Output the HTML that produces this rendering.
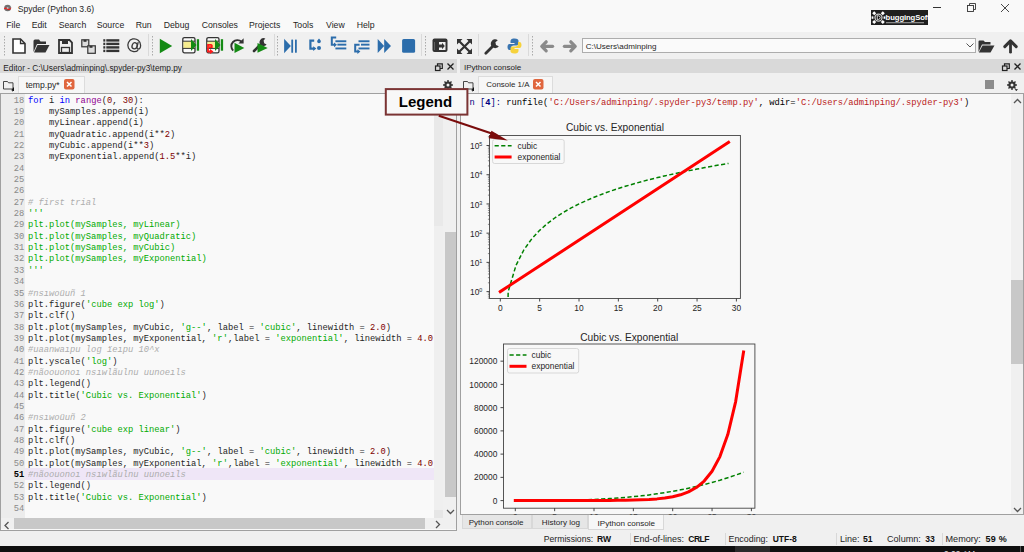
<!DOCTYPE html><html><head><meta charset="utf-8"><title>Spyder</title><style>html,body{margin:0;padding:0;}body{width:1024px;height:552px;overflow:hidden;position:relative;background:#f0f0f0;font-family:"Liberation Sans",sans-serif;}svg{display:block}</style></head><body>
<div style="position:absolute;left:0px;top:0px;width:1024px;height:32px;background:#f9f9f9;"></div>
<div style="position:absolute;left:0px;top:32px;width:1024px;height:26px;background:#f0f0f0;"></div>
<svg style="position:absolute;left:3px;top:4px;overflow:visible;" width="10" height="8" viewBox="0 0 10 8"><ellipse cx="4.6" cy="4" rx="3.4" ry="3.2" fill="#707070"/><path d="M1 4.6 Q2.5 2.6 4.5 4.2 Q6.5 5.6 8.4 3.2 L8 4.8 Q6.2 6.8 4.3 5.4 Q2.6 4.2 1.3 5.6 Z" fill="#ee1c1c"/><circle cx="4.6" cy="4" r="1" fill="#f4f4f4" opacity="0.6"/></svg>
<span style="position:absolute;left:17.75px;top:-0.93px;line-height:20px;font-size:8.6px;font-family:'Liberation Sans', sans-serif;color:#1f1f1f;font-weight:400;font-style:normal;white-space:pre;">Spyder (Python 3.6)</span>
<div style="position:absolute;left:933px;top:7px;width:8px;height:1px;background:#333;"></div>
<svg style="position:absolute;left:966px;top:2px;overflow:visible;" width="10" height="10" viewBox="0 0 10 10"><rect x="1.5" y="3.5" width="6" height="6" fill="none" stroke="#333" stroke-width="0.9"/><path d="M3.5 3.5 V1.5 H9.5 V7.5 H7.5" fill="none" stroke="#333" stroke-width="0.9"/></svg>
<svg style="position:absolute;left:1000px;top:3px;overflow:visible;" width="10" height="10" viewBox="0 0 10 10"><path d="M1 1 L9 9 M9 1 L1 9" stroke="#333" stroke-width="0.9"/></svg>
<div style="position:absolute;left:871px;top:9.7px;width:57px;height:15.2px;background:#1f1f1f;"></div>
<span style="position:absolute;left:885.60px;top:7.73px;line-height:20px;font-size:7.7px;font-family:'Liberation Sans', sans-serif;color:#fff;font-weight:700;font-style:normal;white-space:pre;letter-spacing:-0.1px">buggingSoft</span>
<svg style="position:absolute;left:871px;top:9.7px;overflow:visible;" width="15" height="15.2" viewBox="0 0 15 15.2"><path d="M3.2 1.2 L5.2 3.2 L3.2 5.2 L1.2 3.2 Z M11.8 1.2 L13.8 3.2 L11.8 5.2 L9.8 3.2 Z M3.2 10 L5.2 12 L3.2 14 L1.2 12 Z M11.8 10 L13.8 12 L11.8 14 L9.8 12 Z" fill="#fff"/><rect x="0.6" y="6.4" width="1.8" height="2.4" fill="#fff"/><rect x="12.6" y="6.4" width="1.8" height="2.4" fill="#fff"/><circle cx="7.5" cy="7.6" r="3.5" fill="#000" stroke="#cfcfcf" stroke-width="1.3"/><path d="M6.2 5.8 H7.4 A1.8 1.8 0 0 1 7.4 9.4 H6.2 Z" fill="none" stroke="#fff" stroke-width="0.9"/></svg>
<svg style="position:absolute;left:886px;top:21.6px;overflow:visible;" width="40" height="2" viewBox="0 0 40 2"><rect x="0" y="0" width="38" height="1.3" fill="#8a8a8a"/></svg>
<span style="position:absolute;left:6.30px;top:15.49px;line-height:20px;font-size:8.7px;font-family:'Liberation Sans', sans-serif;color:#1f1f1f;font-weight:400;font-style:normal;white-space:pre;">File</span>
<span style="position:absolute;left:31.70px;top:15.49px;line-height:20px;font-size:8.7px;font-family:'Liberation Sans', sans-serif;color:#1f1f1f;font-weight:400;font-style:normal;white-space:pre;">Edit</span>
<span style="position:absolute;left:58.70px;top:15.49px;line-height:20px;font-size:8.7px;font-family:'Liberation Sans', sans-serif;color:#1f1f1f;font-weight:400;font-style:normal;white-space:pre;">Search</span>
<span style="position:absolute;left:96.70px;top:15.49px;line-height:20px;font-size:8.7px;font-family:'Liberation Sans', sans-serif;color:#1f1f1f;font-weight:400;font-style:normal;white-space:pre;">Source</span>
<span style="position:absolute;left:135.70px;top:15.49px;line-height:20px;font-size:8.7px;font-family:'Liberation Sans', sans-serif;color:#1f1f1f;font-weight:400;font-style:normal;white-space:pre;">Run</span>
<span style="position:absolute;left:163.75px;top:15.49px;line-height:20px;font-size:8.7px;font-family:'Liberation Sans', sans-serif;color:#1f1f1f;font-weight:400;font-style:normal;white-space:pre;">Debug</span>
<span style="position:absolute;left:201.75px;top:15.49px;line-height:20px;font-size:8.7px;font-family:'Liberation Sans', sans-serif;color:#1f1f1f;font-weight:400;font-style:normal;white-space:pre;">Consoles</span>
<span style="position:absolute;left:249.00px;top:15.49px;line-height:20px;font-size:8.7px;font-family:'Liberation Sans', sans-serif;color:#1f1f1f;font-weight:400;font-style:normal;white-space:pre;">Projects</span>
<span style="position:absolute;left:293.00px;top:15.49px;line-height:20px;font-size:8.7px;font-family:'Liberation Sans', sans-serif;color:#1f1f1f;font-weight:400;font-style:normal;white-space:pre;">Tools</span>
<span style="position:absolute;left:326.00px;top:15.49px;line-height:20px;font-size:8.7px;font-family:'Liberation Sans', sans-serif;color:#1f1f1f;font-weight:400;font-style:normal;white-space:pre;">View</span>
<span style="position:absolute;left:356.75px;top:15.49px;line-height:20px;font-size:8.7px;font-family:'Liberation Sans', sans-serif;color:#1f1f1f;font-weight:400;font-style:normal;white-space:pre;">Help</span>
<svg style="position:absolute;left:4px;top:36px;overflow:visible;" width="2" height="20" viewBox="0 0 2 20"><rect x="0" y="0" width="1" height="1.5" fill="#aaa"/><rect x="0" y="3" width="1" height="1.5" fill="#aaa"/><rect x="0" y="6" width="1" height="1.5" fill="#aaa"/><rect x="0" y="9" width="1" height="1.5" fill="#aaa"/><rect x="0" y="12" width="1" height="1.5" fill="#aaa"/><rect x="0" y="15" width="1" height="1.5" fill="#aaa"/><rect x="0" y="18" width="1" height="1.5" fill="#aaa"/></svg>
<div style="position:absolute;left:148px;top:34px;width:1px;height:22px;background:#dadada;"></div>
<svg style="position:absolute;left:152px;top:36px;overflow:visible;" width="2" height="20" viewBox="0 0 2 20"><rect x="0" y="0" width="1" height="1.5" fill="#aaa"/><rect x="0" y="3" width="1" height="1.5" fill="#aaa"/><rect x="0" y="6" width="1" height="1.5" fill="#aaa"/><rect x="0" y="9" width="1" height="1.5" fill="#aaa"/><rect x="0" y="12" width="1" height="1.5" fill="#aaa"/><rect x="0" y="15" width="1" height="1.5" fill="#aaa"/><rect x="0" y="18" width="1" height="1.5" fill="#aaa"/></svg>
<div style="position:absolute;left:274px;top:34px;width:1px;height:22px;background:#dadada;"></div>
<svg style="position:absolute;left:277px;top:36px;overflow:visible;" width="2" height="20" viewBox="0 0 2 20"><rect x="0" y="0" width="1" height="1.5" fill="#aaa"/><rect x="0" y="3" width="1" height="1.5" fill="#aaa"/><rect x="0" y="6" width="1" height="1.5" fill="#aaa"/><rect x="0" y="9" width="1" height="1.5" fill="#aaa"/><rect x="0" y="12" width="1" height="1.5" fill="#aaa"/><rect x="0" y="15" width="1" height="1.5" fill="#aaa"/><rect x="0" y="18" width="1" height="1.5" fill="#aaa"/></svg>
<div style="position:absolute;left:421px;top:34px;width:1px;height:22px;background:#dadada;"></div>
<svg style="position:absolute;left:425px;top:36px;overflow:visible;" width="2" height="20" viewBox="0 0 2 20"><rect x="0" y="0" width="1" height="1.5" fill="#aaa"/><rect x="0" y="3" width="1" height="1.5" fill="#aaa"/><rect x="0" y="6" width="1" height="1.5" fill="#aaa"/><rect x="0" y="9" width="1" height="1.5" fill="#aaa"/><rect x="0" y="12" width="1" height="1.5" fill="#aaa"/><rect x="0" y="15" width="1" height="1.5" fill="#aaa"/><rect x="0" y="18" width="1" height="1.5" fill="#aaa"/></svg>
<div style="position:absolute;left:478px;top:34px;width:1px;height:22px;background:#dadada;"></div>
<div style="position:absolute;left:528px;top:34px;width:1px;height:22px;background:#dadada;"></div>
<svg style="position:absolute;left:532px;top:36px;overflow:visible;" width="2" height="20" viewBox="0 0 2 20"><rect x="0" y="0" width="1" height="1.5" fill="#aaa"/><rect x="0" y="3" width="1" height="1.5" fill="#aaa"/><rect x="0" y="6" width="1" height="1.5" fill="#aaa"/><rect x="0" y="9" width="1" height="1.5" fill="#aaa"/><rect x="0" y="12" width="1" height="1.5" fill="#aaa"/><rect x="0" y="15" width="1" height="1.5" fill="#aaa"/><rect x="0" y="18" width="1" height="1.5" fill="#aaa"/></svg>
<svg style="position:absolute;left:12px;top:38px;overflow:visible;" width="14" height="16" viewBox="0 0 14 16"><path d="M1 1 H8.5 L13 5.5 V15 H1 Z" fill="#fff" stroke="#333" stroke-width="1.6"/><path d="M8.5 1 V5.5 H13" fill="none" stroke="#333" stroke-width="1.3"/></svg>
<svg style="position:absolute;left:33px;top:39px;overflow:visible;" width="17" height="14" viewBox="0 0 17 14"><path d="M0.5 2 Q0.5 0.5 2 0.5 H6 L7.5 2.5 H13 V5 H4 L0.5 13 Z" fill="#333"/><path d="M4.5 6 H16.5 L12.5 13.5 H1 Z" fill="#333"/></svg>
<svg style="position:absolute;left:58px;top:39px;overflow:visible;" width="15" height="15" viewBox="0 0 15 15"><path d="M1 1 H11.5 L14 3.5 V14 H1 Z" fill="none" stroke="#333" stroke-width="1.8"/><rect x="4" y="1" width="6" height="4" fill="#333"/><rect x="3.5" y="8.5" width="8" height="5" fill="none" stroke="#333" stroke-width="1.3"/></svg>
<svg style="position:absolute;left:81px;top:39px;overflow:visible;" width="15" height="15" viewBox="0 0 15 15"><rect x="0.8" y="0.8" width="7" height="7" fill="#ddd" stroke="#333" stroke-width="1.2"/><rect x="2.5" y="0.8" width="3" height="2" fill="#333"/><rect x="6.8" y="6.8" width="7.5" height="7.5" fill="#ddd" stroke="#333" stroke-width="1.2"/><rect x="8.5" y="6.8" width="3" height="2" fill="#333"/></svg>
<svg style="position:absolute;left:103px;top:39px;overflow:visible;" width="17" height="14" viewBox="0 0 17 14"><rect x="0.3" y="0.20" width="2" height="2.4" fill="#333"/><rect x="3.3" y="0.20" width="13" height="2.4" fill="#333"/><rect x="0.3" y="3.70" width="2" height="2.4" fill="#333"/><rect x="3.3" y="3.70" width="13" height="2.4" fill="#333"/><rect x="0.3" y="7.20" width="2" height="2.4" fill="#333"/><rect x="3.3" y="7.20" width="13" height="2.4" fill="#333"/><rect x="0.3" y="10.70" width="2" height="2.4" fill="#333"/><rect x="3.3" y="10.70" width="13" height="2.4" fill="#333"/></svg>
<svg style="position:absolute;left:127px;top:38px;overflow:visible;" width="15" height="16" viewBox="0 0 15 16"><path d="M11.2 12.2 A6.4 6.4 0 1 1 13.6 7.2 C13.6 9.6 12.6 11 11.2 11 C10.2 11 9.8 10.2 10 9.2 L11.2 4.2" fill="none" stroke="#3a3a3a" stroke-width="1.3"/><ellipse cx="7.6" cy="7.8" rx="2.5" ry="3.1" transform="rotate(20 7.6 7.8)" fill="none" stroke="#3a3a3a" stroke-width="1.3"/></svg>
<svg style="position:absolute;left:159px;top:38px;overflow:visible;" width="14" height="16" viewBox="0 0 14 16"><path d="M0.8 0.8 L13.2 8 L0.8 15.2 Z" fill="#148a14"/></svg>
<svg style="position:absolute;left:182px;top:37px;overflow:visible;" width="18" height="17" viewBox="0 0 18 17"><rect x="0.8" y="0.6" width="12.2" height="15.2" rx="1.6" fill="#fafafa" stroke="#333" stroke-width="1.3"/><rect x="1.5" y="4.2" width="10.8" height="7.2" fill="#f6ec8e"/><path d="M0.8 4.2 H13 M0.8 11.4 H13" stroke="#333" stroke-width="1"/><path d="M9 2 L14.5 8.1 L9 14 Z" fill="#148a14"/><rect x="14.8" y="2.2" width="2.3" height="11.5" fill="#148a14"/></svg>
<svg style="position:absolute;left:205.6px;top:37px;overflow:visible;" width="18" height="17" viewBox="0 0 18 17"><rect x="0.8" y="0.6" width="12.2" height="15.2" rx="1.6" fill="#fafafa" stroke="#333" stroke-width="1.3"/><rect x="1.5" y="4.2" width="10.8" height="7.2" fill="#f6ec8e"/><path d="M0.8 4.2 H13 M0.8 11.4 H13" stroke="#333" stroke-width="1"/><path d="M9 2 L14.5 8.1 L9 14 Z" fill="#148a14"/><rect x="14.8" y="2.2" width="2.3" height="11.5" fill="#148a14"/><path d="M5.8 7.8 H2 V14.5 H4.5" fill="none" stroke="#ff1a1a" stroke-width="1.8"/><path d="M4 12 L7.5 14.6 L4 17 Z" fill="#ff1a1a"/><path d="M5.8 7.8 V10.2 H3" fill="none" stroke="#ff1a1a" stroke-width="1.8"/></svg>
<svg style="position:absolute;left:229px;top:37px;overflow:visible;" width="16" height="17" viewBox="0 0 16 17"><path d="M12.6 4.8 A5.4 5.4 0 1 0 4.2 13.6" fill="none" stroke="#333" stroke-width="1.9"/><path d="M14.6 1.2 V6.4 H9.4 Z" fill="#333"/><path d="M5.5 5.8 L15.3 10.9 L5.5 16 Z" fill="#148a14"/></svg>
<svg style="position:absolute;left:252px;top:37px;overflow:visible;" width="17" height="17" viewBox="0 0 17 17"><path d="M2 14 L8 8" stroke="#333" stroke-width="2.6" stroke-linecap="round"/><path d="M13.4 1.6 A3.9 3.9 0 1 0 14.6 7.4 L12.2 6.2 L11.6 3.6 Z" fill="#333"/><path d="M5.5 6 L15.7 10.9 L5.5 15.8 Z" fill="#148a14"/></svg>
<svg style="position:absolute;left:284px;top:38px;overflow:visible;" width="14" height="16" viewBox="0 0 14 16"><path d="M0.1 0.8 L6.9 8 L0.1 15.2 Z" fill="#2c6dab"/><rect x="7.3" y="1.5" width="1.8" height="13.3" rx="0.6" fill="#2c6dab"/><rect x="11" y="1.5" width="1.8" height="13.3" rx="0.6" fill="#2c6dab"/></svg>
<svg style="position:absolute;left:308px;top:38px;overflow:visible;" width="14" height="14" viewBox="0 0 14 14"><path d="M6.2 2.6 H2.4 V10.6 H6" fill="none" stroke="#2c6dab" stroke-width="2.2"/><path d="M5.2 8.2 L8.4 10.6 L5.2 13 Z" fill="#2c6dab"/><circle cx="11" cy="3.4" r="1.8" fill="#2c6dab"/><circle cx="11" cy="9.9" r="2" fill="#2c6dab"/><path d="M9.6 2.6 L11 0.4 L12.4 2.6 Z" fill="#2c6dab"/></svg>
<svg style="position:absolute;left:330px;top:36px;overflow:visible;" width="17" height="14" viewBox="0 0 17 14"><path d="M6.2 1.5 H1.8 V8.8 H4.5" fill="none" stroke="#2c6dab" stroke-width="2"/><path d="M4 6.4 L7 8.8 L4 11.2 Z" fill="#2c6dab"/><rect x="5.4" y="4.3" width="10.9" height="1.9" fill="#2c6dab"/><rect x="7.4" y="7.7" width="8.9" height="1.9" fill="#2c6dab"/><rect x="5.4" y="11.5" width="10.9" height="1.9" fill="#2c6dab"/></svg>
<svg style="position:absolute;left:353px;top:38px;overflow:visible;" width="17" height="16" viewBox="0 0 17 16"><path d="M6.6 6.7 H2.2 V13.6 H5" fill="none" stroke="#2c6dab" stroke-width="2"/><path d="M4.4 11.2 L7.4 13.6 L4.4 16 Z" fill="#2c6dab"/><rect x="5.5" y="2.3" width="11" height="1.9" fill="#2c6dab"/><rect x="8" y="5.7" width="8.5" height="1.9" fill="#2c6dab"/><rect x="5.5" y="9.5" width="11" height="1.9" fill="#2c6dab"/></svg>
<svg style="position:absolute;left:377px;top:38px;overflow:visible;" width="15" height="16" viewBox="0 0 15 16"><path d="M0.7 1.1 L7.2 8 L0.7 14.9 Z" fill="#2c6dab"/><path d="M7.2 1.1 L14 8 L7.2 14.9 Z" fill="#2c6dab"/></svg>
<svg style="position:absolute;left:402px;top:38px;overflow:visible;" width="14" height="16" viewBox="0 0 14 16"><rect x="0.1" y="1.1" width="13" height="13.7" rx="1.6" fill="#2c6dab"/></svg>
<svg style="position:absolute;left:432px;top:38px;overflow:visible;" width="16" height="14" viewBox="0 0 16 14"><rect x="0.5" y="0.5" width="15" height="13.5" rx="2" fill="#333"/><rect x="2.5" y="4" width="11" height="8" fill="#f0f0f0"/><rect x="2.5" y="4" width="4.5" height="8" fill="#333"/><path d="M7 6.5 H10 V4.8 L12.8 8 L10 11.2 V9.5 H7 Z" fill="#333"/></svg>
<svg style="position:absolute;left:457px;top:39px;overflow:visible;" width="15" height="15" viewBox="0 0 15 15"><path d="M2 2 L13 13 M13 2 L2 13" stroke="#333" stroke-width="2.2"/><path d="M0 0 H5.5 L0 5.5 Z M15 0 V5.5 L9.5 0 Z M0 15 V9.5 L5.5 15 Z M15 15 H9.5 L15 9.5 Z" fill="#333"/></svg>
<svg style="position:absolute;left:484px;top:39px;overflow:visible;" width="16" height="16" viewBox="0 0 16 16"><path d="M1.8 14.2 L8.5 7.5" stroke="#333" stroke-width="2.8" stroke-linecap="round"/><path d="M13.8 1.2 A4.4 4.4 0 1 0 14.8 7.2 L12 6 L11.4 3.2 Z" fill="#333"/></svg>
<svg style="position:absolute;left:507px;top:38px;overflow:visible;" width="15" height="16" viewBox="0 0 15 16"><path d="M7.5 0.5 C4 0.5 3.5 2 3.5 3.5 V5 H7.5 V6 H2.5 C1 6 0.5 7.5 0.5 9 C0.5 10.5 1 12 2.5 12 H4 V10 C4 8.5 5 7.5 6.5 7.5 H9.5 C10.8 7.5 11.5 6.8 11.5 5.5 V3 C11.5 1.5 10.5 0.5 7.5 0.5 Z" fill="#3a75b0"/><path d="M7.5 15.5 C11 15.5 11.5 14 11.5 12.5 V11 H7.5 V10 H12.5 C14 10 14.5 8.5 14.5 7 C14.5 5.5 14 4 12.5 4 H11 V6 C11 7.5 10 8.5 8.5 8.5 H5.5 C4.2 8.5 3.5 9.2 3.5 10.5 V13 C3.5 14.5 4.5 15.5 7.5 15.5 Z" fill="#f6d23c"/></svg>
<svg style="position:absolute;left:540px;top:40px;overflow:visible;" width="15" height="13" viewBox="0 0 15 13"><path d="M6.2 1.8 L1.8 6.3 L6.2 10.8" fill="none" stroke="#8a8a8a" stroke-width="3.2" stroke-linejoin="round" stroke-linecap="round"/><path d="M2.5 6.3 H12.6" stroke="#8a8a8a" stroke-width="3.2" stroke-linecap="round"/></svg>
<svg style="position:absolute;left:563px;top:40px;overflow:visible;" width="15" height="13" viewBox="0 0 15 13"><path d="M7.8 1.8 L12.2 6.3 L7.8 10.8" fill="none" stroke="#8a8a8a" stroke-width="3.2" stroke-linejoin="round" stroke-linecap="round"/><path d="M1.4 6.3 H11.5" stroke="#8a8a8a" stroke-width="3.2" stroke-linecap="round"/></svg>
<div style="position:absolute;left:582px;top:38px;width:394px;height:15px;background:#fafafa;box-sizing:border-box;border:1px solid #adadad;"></div>
<span style="position:absolute;left:585.75px;top:37.31px;line-height:20px;font-size:8.05px;font-family:'Liberation Sans', sans-serif;color:#1f1f1f;font-weight:400;font-style:normal;white-space:pre;">C:\Users\adminping</span>
<svg style="position:absolute;left:966px;top:43px;overflow:visible;" width="8" height="5" viewBox="0 0 8 5"><path d="M0.5 0.5 L4 4 L7.5 0.5" fill="none" stroke="#555" stroke-width="1"/></svg>
<svg style="position:absolute;left:978px;top:40px;overflow:visible;" width="17" height="13" viewBox="0 0 17 13"><path d="M0.5 1.5 Q0.5 0.5 1.5 0.5 H5.5 L7 2 H12.5 V4.5 H4 L0.5 12 Z" fill="#333"/><path d="M4.5 5.5 H16.5 L12.5 12.5 H0.8 Z" fill="#333"/></svg>
<svg style="position:absolute;left:1003px;top:39px;overflow:visible;" width="15" height="15" viewBox="0 0 15 15"><path d="M1.8 7.6 L7.5 1.9 L13.2 7.6" fill="none" stroke="#333" stroke-width="3" stroke-linecap="round" stroke-linejoin="round"/><path d="M7.5 3 V13.2" stroke="#333" stroke-width="2.8" stroke-linecap="round"/></svg>
<div style="position:absolute;left:0px;top:59px;width:457px;height:14px;background:#d9d9d9;"></div>
<span style="position:absolute;left:3.30px;top:58.53px;line-height:20px;font-size:8.27px;font-family:'Liberation Sans', sans-serif;color:#1f1f1f;font-weight:400;font-style:normal;white-space:pre;">Editor - C:\Users\adminping\.spyder-py3\temp.py</span>
<svg style="position:absolute;left:435px;top:62.5px;overflow:visible;" width="8" height="8" viewBox="0 0 8 8"><rect x="0.5" y="3" width="4.5" height="4.5" fill="none" stroke="#222" stroke-width="1.2"/><path d="M2.5 3 V0.8 H7.3 V5.5 H5" fill="none" stroke="#222" stroke-width="1.2"/></svg>
<svg style="position:absolute;left:447px;top:63px;overflow:visible;" width="7" height="7" viewBox="0 0 7 7"><path d="M0.5 0.5 L6.5 6.5 M6.5 0.5 L0.5 6.5" stroke="#222" stroke-width="1.3"/></svg>
<div style="position:absolute;left:460px;top:59px;width:564px;height:14px;background:#d9d9d9;"></div>
<span style="position:absolute;left:463.90px;top:57.90px;line-height:20px;font-size:8.07px;font-family:'Liberation Sans', sans-serif;color:#1f1f1f;font-weight:400;font-style:normal;white-space:pre;">IPython console</span>
<svg style="position:absolute;left:1001.5px;top:62.5px;overflow:visible;" width="8" height="8" viewBox="0 0 8 8"><rect x="0.5" y="3" width="4.5" height="4.5" fill="none" stroke="#222" stroke-width="1.2"/><path d="M2.5 3 V0.8 H7.3 V5.5 H5" fill="none" stroke="#222" stroke-width="1.2"/></svg>
<svg style="position:absolute;left:1014px;top:63px;overflow:visible;" width="7" height="7" viewBox="0 0 7 7"><path d="M0.5 0.5 L6.5 6.5 M6.5 0.5 L0.5 6.5" stroke="#222" stroke-width="1.3"/></svg>
<svg style="position:absolute;left:3px;top:80px;overflow:visible;" width="12" height="11" viewBox="0 0 12 11"><path d="M0.5 1.5 H4.5 L5.5 2.8 H10 V9 H0.5 Z" fill="none" stroke="#333" stroke-width="0.9"/><path d="M10.5 7.5 V10 H8.5 M9 9 L11 10.3 L9 11" fill="none" stroke="#111" stroke-width="1"/></svg>
<div style="position:absolute;left:18px;top:76px;width:67px;height:17px;background:#f7f7f7;box-sizing:border-box;border:1px solid #dcdcdc;border-bottom:none;"></div>
<span style="position:absolute;left:25.70px;top:74.62px;line-height:20px;font-size:8.6px;font-family:'Liberation Sans', sans-serif;color:#1f1f1f;font-weight:400;font-style:normal;white-space:pre;">temp.py*</span>
<svg style="position:absolute;left:64px;top:78.5px;overflow:visible;" width="11" height="11" viewBox="0 0 11 11"><rect x="0" y="0" width="10.5" height="10.5" rx="2" fill="#e0663e"/><path d="M3 3 L7.5 7.5 M7.5 3 L3 7.5" stroke="#fff" stroke-width="1.5"/></svg>
<svg style="position:absolute;left:443px;top:80px;overflow:visible;" width="11" height="11" viewBox="0 0 11 11"><polygon points="8.32,4.26 9.95,4.30 9.95,5.70 8.32,5.74 7.87,6.82 8.99,8.01 8.01,8.99 6.82,7.87 5.74,8.32 5.70,9.95 4.30,9.95 4.26,8.32 3.18,7.87 1.99,8.99 1.01,8.01 2.13,6.82 1.68,5.74 0.05,5.70 0.05,4.30 1.68,4.26 2.13,3.18 1.01,1.99 1.99,1.01 3.18,2.13 4.26,1.68 4.30,0.05 5.70,0.05 5.74,1.68 6.82,2.13 8.01,1.01 8.99,1.99 7.87,3.18" fill="#333"/><circle cx="5" cy="5" r="3.6" fill="#333"/><circle cx="5" cy="5" r="1.5" fill="#f0f0f0"/><path d="M7.6 9.2 L11 9.2 L9.3 11 Z" fill="#111"/></svg>
<svg style="position:absolute;left:463px;top:80px;overflow:visible;" width="12" height="11" viewBox="0 0 12 11"><path d="M0.5 1.5 H4.5 L5.5 2.8 H10 V9 H0.5 Z" fill="none" stroke="#333" stroke-width="0.9"/><path d="M10.5 7.5 V10 H8.5 M9 9 L11 10.3 L9 11" fill="none" stroke="#111" stroke-width="1"/></svg>
<div style="position:absolute;left:478px;top:76px;width:75px;height:17px;background:#f7f7f7;box-sizing:border-box;border:1px solid #dcdcdc;border-bottom:none;"></div>
<span style="position:absolute;left:486.30px;top:74.55px;line-height:20px;font-size:7.93px;font-family:'Liberation Sans', sans-serif;color:#1f1f1f;font-weight:400;font-style:normal;white-space:pre;">Console 1/A</span>
<svg style="position:absolute;left:533px;top:78.5px;overflow:visible;" width="11" height="11" viewBox="0 0 11 11"><rect x="0" y="0" width="10.5" height="10.5" rx="2" fill="#e0663e"/><path d="M3 3 L7.5 7.5 M7.5 3 L3 7.5" stroke="#fff" stroke-width="1.5"/></svg>
<div style="position:absolute;left:985px;top:80px;width:9px;height:9px;background:#8c8c8c;"></div>
<svg style="position:absolute;left:1007px;top:80px;overflow:visible;" width="11" height="11" viewBox="0 0 11 11"><polygon points="8.32,4.26 9.95,4.30 9.95,5.70 8.32,5.74 7.87,6.82 8.99,8.01 8.01,8.99 6.82,7.87 5.74,8.32 5.70,9.95 4.30,9.95 4.26,8.32 3.18,7.87 1.99,8.99 1.01,8.01 2.13,6.82 1.68,5.74 0.05,5.70 0.05,4.30 1.68,4.26 2.13,3.18 1.01,1.99 1.99,1.01 3.18,2.13 4.26,1.68 4.30,0.05 5.70,0.05 5.74,1.68 6.82,2.13 8.01,1.01 8.99,1.99 7.87,3.18" fill="#333"/><circle cx="5" cy="5" r="3.6" fill="#333"/><circle cx="5" cy="5" r="1.5" fill="#f0f0f0"/><path d="M7.6 9.2 L11 9.2 L9.3 11 Z" fill="#111"/></svg>
<div style="position:absolute;left:0px;top:93px;width:457px;height:438px;background:#f9f9f9;box-sizing:border-box;border:1px solid #a0a0a0;"></div>
<div style="position:absolute;left:1px;top:94px;width:24px;height:424px;background:#ececec;"></div>
<div style="position:absolute;left:434px;top:94px;width:9px;height:132px;background:#e9e9e9;"></div>
<div style="position:absolute;left:434px;top:226px;width:9px;height:284px;background:#efefef;"></div>
<div style="position:absolute;left:434px;top:510px;width:9px;height:8px;background:#e6e6e6;"></div>
<div style="position:absolute;left:443px;top:94px;width:13px;height:424px;background:#f0f0f0;"></div>
<div style="position:absolute;left:444.5px;top:232px;width:11.5px;height:265px;background:#c8c8c8;"></div>
<svg style="position:absolute;left:446px;top:509px;overflow:visible;" width="9" height="6" viewBox="0 0 9 6"><path d="M1 1 L4.5 4.5 L8 1" fill="none" stroke="#555" stroke-width="1.3"/></svg>
<div style="position:absolute;left:1px;top:518px;width:455px;height:11px;background:#f0f0f0;"></div>
<div style="position:absolute;left:13.6px;top:518px;width:411.4px;height:11px;background:#c8c8c8;"></div>
<svg style="position:absolute;left:4px;top:521px;overflow:visible;" width="6" height="9" viewBox="0 0 6 9"><path d="M4.5 1 L1 4.5 L4.5 8" fill="none" stroke="#555" stroke-width="1.3"/></svg>
<svg style="position:absolute;left:434.8px;top:519.8px;overflow:visible;" width="6" height="9" viewBox="0 0 6 9"><path d="M1 1 L4.5 4.5 L1 8" fill="none" stroke="#555" stroke-width="1.3"/></svg>
<div style="position:absolute;left:460px;top:93px;width:564px;height:422px;background:#f8f8f8;box-sizing:border-box;border:1px solid #a0a0a0;"></div>
<div style="position:absolute;left:1011px;top:94px;width:12px;height:420px;background:#f0f0f0;"></div>
<div style="position:absolute;left:1011.2px;top:279.6px;width:11.5px;height:84.3px;background:#c8c8c8;"></div>
<svg style="position:absolute;left:1013px;top:98px;overflow:visible;" width="9" height="6" viewBox="0 0 9 6"><path d="M1 5 L4.5 1.5 L8 5" fill="none" stroke="#555" stroke-width="1.3"/></svg>
<svg style="position:absolute;left:1013px;top:507px;overflow:visible;" width="9" height="6" viewBox="0 0 9 6"><path d="M1 1 L4.5 4.5 L8 1" fill="none" stroke="#555" stroke-width="1.3"/></svg>
<div style="position:absolute;left:462.3px;top:515px;width:69.8px;height:14.3px;background:#e6e6e6;box-sizing:border-box;border:1px solid #d8d8d8;border-top:none;"></div>
<span style="position:absolute;left:468.70px;top:513.32px;line-height:20px;font-size:8.01px;font-family:'Liberation Sans', sans-serif;color:#1f1f1f;font-weight:400;font-style:normal;white-space:pre;">Python console</span>
<div style="position:absolute;left:532.1px;top:515px;width:55.9px;height:14.3px;background:#e6e6e6;box-sizing:border-box;border:1px solid #d8d8d8;border-top:none;"></div>
<span style="position:absolute;left:541.80px;top:513.30px;line-height:20px;font-size:8.09px;font-family:'Liberation Sans', sans-serif;color:#1f1f1f;font-weight:400;font-style:normal;white-space:pre;">History log</span>
<div style="position:absolute;left:588px;top:515px;width:76.2px;height:15.4px;background:#f7f7f7;box-sizing:border-box;border:1px solid #d8d8d8;border-top:none;"></div>
<span style="position:absolute;left:597.60px;top:514.00px;line-height:20px;font-size:8.09px;font-family:'Liberation Sans', sans-serif;color:#1f1f1f;font-weight:400;font-style:normal;white-space:pre;">IPython console</span>
<span style="position:absolute;left:543.80px;top:529.11px;line-height:20px;font-size:8.63px;font-family:'Liberation Sans', sans-serif;color:#1f1f1f;font-weight:400;font-style:normal;white-space:pre;">Permissions:</span>
<span style="position:absolute;left:597.10px;top:529.13px;line-height:20px;font-size:8.56px;font-family:'Liberation Sans', sans-serif;color:#111;font-weight:700;font-style:normal;white-space:pre;">RW</span>
<div style="position:absolute;left:630px;top:533px;width:1px;height:12px;background:#d8d8d8;"></div>
<span style="position:absolute;left:633.60px;top:528.98px;line-height:20px;font-size:9.0px;font-family:'Liberation Sans', sans-serif;color:#1f1f1f;font-weight:400;font-style:normal;white-space:pre;">End-of-lines:</span>
<span style="position:absolute;left:688.30px;top:529.12px;line-height:20px;font-size:8.6px;font-family:'Liberation Sans', sans-serif;color:#111;font-weight:700;font-style:normal;white-space:pre;letter-spacing:-0.6px">CRLF</span>
<div style="position:absolute;left:725px;top:533px;width:1px;height:12px;background:#d8d8d8;"></div>
<span style="position:absolute;left:728.50px;top:529.02px;line-height:20px;font-size:8.9px;font-family:'Liberation Sans', sans-serif;color:#1f1f1f;font-weight:400;font-style:normal;white-space:pre;">Encoding:</span>
<span style="position:absolute;left:772.70px;top:529.15px;line-height:20px;font-size:8.5px;font-family:'Liberation Sans', sans-serif;color:#111;font-weight:700;font-style:normal;white-space:pre;">UTF-8</span>
<div style="position:absolute;left:836px;top:533px;width:1px;height:12px;background:#d8d8d8;"></div>
<span style="position:absolute;left:839.90px;top:528.98px;line-height:20px;font-size:9.0px;font-family:'Liberation Sans', sans-serif;color:#1f1f1f;font-weight:400;font-style:normal;white-space:pre;">Line:</span>
<span style="position:absolute;left:863.00px;top:529.12px;line-height:20px;font-size:8.6px;font-family:'Liberation Sans', sans-serif;color:#111;font-weight:700;font-style:normal;white-space:pre;">51</span>
<span style="position:absolute;left:887.00px;top:528.95px;line-height:20px;font-size:9.1px;font-family:'Liberation Sans', sans-serif;color:#1f1f1f;font-weight:400;font-style:normal;white-space:pre;">Column:</span>
<span style="position:absolute;left:925.30px;top:529.12px;line-height:20px;font-size:8.6px;font-family:'Liberation Sans', sans-serif;color:#111;font-weight:700;font-style:normal;white-space:pre;">33</span>
<div style="position:absolute;left:942px;top:533px;width:1px;height:12px;background:#d8d8d8;"></div>
<span style="position:absolute;left:945.50px;top:528.95px;line-height:20px;font-size:9.1px;font-family:'Liberation Sans', sans-serif;color:#1f1f1f;font-weight:400;font-style:normal;white-space:pre;">Memory:</span>
<span style="position:absolute;left:985.60px;top:528.98px;line-height:20px;font-size:9.0px;font-family:'Liberation Sans', sans-serif;color:#111;font-weight:700;font-style:normal;white-space:pre;letter-spacing:0.2px">59 %</span>
<div style="position:absolute;left:0px;top:546px;width:1024px;height:6px;background:#0f0f0f;"></div>
<div style="position:absolute;left:735px;top:546px;width:35px;height:6px;background:#2a2a2a;"></div>
<span style="position:absolute;left:944.00px;top:544.05px;line-height:20px;font-size:8.5px;font-family:'Liberation Sans', sans-serif;color:#ddd;font-weight:400;font-style:normal;white-space:pre;">9:09 AM</span>
<div style="position:absolute;left:1020px;top:546px;width:1px;height:6px;background:#555;"></div>
<div style="position:absolute;left:25px;top:468.20000000000005px;width:409px;height:11.5px;background:#efe6f7;"></div>
<div style="position:absolute;left:25px;top:94px;width:409px;height:424px;overflow:hidden">
<div style="position:absolute;left:3px;top:1.55px;height:11.35px;line-height:11.35px;font-family:'Liberation Mono', monospace;font-size:8.77px;white-space:pre"><span style="color:#0000ff;">for</span><span style="color:#262626;"> i </span><span style="color:#0000ff;">in</span><span style="color:#262626;"> </span><span style="color:#900090;">range</span><span style="color:#262626;">(</span><span style="color:#800000;">0</span><span style="color:#262626;">, </span><span style="color:#800000;">30</span><span style="color:#262626;">):</span></div>
<div style="position:absolute;left:3px;top:12.90px;height:11.35px;line-height:11.35px;font-family:'Liberation Mono', monospace;font-size:8.77px;white-space:pre"><span style="color:#262626;">    mySamples.append(i)</span></div>
<div style="position:absolute;left:3px;top:24.25px;height:11.35px;line-height:11.35px;font-family:'Liberation Mono', monospace;font-size:8.77px;white-space:pre"><span style="color:#262626;">    myLinear.append(i)</span></div>
<div style="position:absolute;left:3px;top:35.60px;height:11.35px;line-height:11.35px;font-family:'Liberation Mono', monospace;font-size:8.77px;white-space:pre"><span style="color:#262626;">    myQuadratic.append(i**</span><span style="color:#800000;">2</span><span style="color:#262626;">)</span></div>
<div style="position:absolute;left:3px;top:46.95px;height:11.35px;line-height:11.35px;font-family:'Liberation Mono', monospace;font-size:8.77px;white-space:pre"><span style="color:#262626;">    myCubic.append(i**</span><span style="color:#800000;">3</span><span style="color:#262626;">)</span></div>
<div style="position:absolute;left:3px;top:58.30px;height:11.35px;line-height:11.35px;font-family:'Liberation Mono', monospace;font-size:8.77px;white-space:pre"><span style="color:#262626;">    myExponential.append(</span><span style="color:#800000;">1.5</span><span style="color:#262626;">**i)</span></div>
<div style="position:absolute;left:3px;top:69.65px;height:11.35px;line-height:11.35px;font-family:'Liberation Mono', monospace;font-size:8.77px;white-space:pre"></div>
<div style="position:absolute;left:3px;top:81.00px;height:11.35px;line-height:11.35px;font-family:'Liberation Mono', monospace;font-size:8.77px;white-space:pre"></div>
<div style="position:absolute;left:3px;top:92.35px;height:11.35px;line-height:11.35px;font-family:'Liberation Mono', monospace;font-size:8.77px;white-space:pre"></div>
<div style="position:absolute;left:3px;top:103.70px;height:11.35px;line-height:11.35px;font-family:'Liberation Mono', monospace;font-size:8.77px;white-space:pre"><span style="color:#adadad;font-style:italic;"># first trial</span></div>
<div style="position:absolute;left:3px;top:115.05px;height:11.35px;line-height:11.35px;font-family:'Liberation Mono', monospace;font-size:8.77px;white-space:pre"><span style="color:#00aa00;">'''</span></div>
<div style="position:absolute;left:3px;top:126.40px;height:11.35px;line-height:11.35px;font-family:'Liberation Mono', monospace;font-size:8.77px;white-space:pre"><span style="color:#00aa00;">plt.plot(mySamples, myLinear)</span></div>
<div style="position:absolute;left:3px;top:137.75px;height:11.35px;line-height:11.35px;font-family:'Liberation Mono', monospace;font-size:8.77px;white-space:pre"><span style="color:#00aa00;">plt.plot(mySamples, myQuadratic)</span></div>
<div style="position:absolute;left:3px;top:149.10px;height:11.35px;line-height:11.35px;font-family:'Liberation Mono', monospace;font-size:8.77px;white-space:pre"><span style="color:#00aa00;">plt.plot(mySamples, myCubic)</span></div>
<div style="position:absolute;left:3px;top:160.45px;height:11.35px;line-height:11.35px;font-family:'Liberation Mono', monospace;font-size:8.77px;white-space:pre"><span style="color:#00aa00;">plt.plot(mySamples, myExponential)</span></div>
<div style="position:absolute;left:3px;top:171.80px;height:11.35px;line-height:11.35px;font-family:'Liberation Mono', monospace;font-size:8.77px;white-space:pre"><span style="color:#00aa00;">'''</span></div>
<div style="position:absolute;left:3px;top:183.15px;height:11.35px;line-height:11.35px;font-family:'Liberation Mono', monospace;font-size:8.77px;white-space:pre"></div>
<div style="position:absolute;left:3px;top:194.50px;height:11.35px;line-height:11.35px;font-family:'Liberation Mono', monospace;font-size:8.77px;white-space:pre"><span style="color:#adadad;font-style:italic;">#nsıwoüuñ 1</span></div>
<div style="position:absolute;left:3px;top:205.85px;height:11.35px;line-height:11.35px;font-family:'Liberation Mono', monospace;font-size:8.77px;white-space:pre"><span style="color:#262626;">plt.figure(</span><span style="color:#00aa00;">'cube exp log'</span><span style="color:#262626;">)</span></div>
<div style="position:absolute;left:3px;top:217.20px;height:11.35px;line-height:11.35px;font-family:'Liberation Mono', monospace;font-size:8.77px;white-space:pre"><span style="color:#262626;">plt.clf()</span></div>
<div style="position:absolute;left:3px;top:228.55px;height:11.35px;line-height:11.35px;font-family:'Liberation Mono', monospace;font-size:8.77px;white-space:pre"><span style="color:#262626;">plt.plot(mySamples, myCubic, </span><span style="color:#00aa00;">'g--'</span><span style="color:#262626;">, label = </span><span style="color:#00aa00;">'cubic'</span><span style="color:#262626;">, linewidth = </span><span style="color:#800000;">2.0</span><span style="color:#262626;">)</span></div>
<div style="position:absolute;left:3px;top:239.90px;height:11.35px;line-height:11.35px;font-family:'Liberation Mono', monospace;font-size:8.77px;white-space:pre"><span style="color:#262626;">plt.plot(mySamples, myExponential, </span><span style="color:#00aa00;">'r'</span><span style="color:#262626;">,label = </span><span style="color:#00aa00;">'exponential'</span><span style="color:#262626;">, linewidth = </span><span style="color:#800000;">4.0</span><span style="color:#262626;">)</span></div>
<div style="position:absolute;left:3px;top:251.25px;height:11.35px;line-height:11.35px;font-family:'Liberation Mono', monospace;font-size:8.77px;white-space:pre"><span style="color:#adadad;font-style:italic;">#uaanwaıpu log ïeıpu 10^x</span></div>
<div style="position:absolute;left:3px;top:262.60px;height:11.35px;line-height:11.35px;font-family:'Liberation Mono', monospace;font-size:8.77px;white-space:pre"><span style="color:#262626;">plt.yscale(</span><span style="color:#00aa00;">'log'</span><span style="color:#262626;">)</span></div>
<div style="position:absolute;left:3px;top:273.95px;height:11.35px;line-height:11.35px;font-family:'Liberation Mono', monospace;font-size:8.77px;white-space:pre"><span style="color:#adadad;font-style:italic;">#nãoouonoı nsıwlãulnu uunoeıls</span></div>
<div style="position:absolute;left:3px;top:285.30px;height:11.35px;line-height:11.35px;font-family:'Liberation Mono', monospace;font-size:8.77px;white-space:pre"><span style="color:#262626;">plt.legend()</span></div>
<div style="position:absolute;left:3px;top:296.65px;height:11.35px;line-height:11.35px;font-family:'Liberation Mono', monospace;font-size:8.77px;white-space:pre"><span style="color:#262626;">plt.title(</span><span style="color:#00aa00;">'Cubic vs. Exponential'</span><span style="color:#262626;">)</span></div>
<div style="position:absolute;left:3px;top:308.00px;height:11.35px;line-height:11.35px;font-family:'Liberation Mono', monospace;font-size:8.77px;white-space:pre"></div>
<div style="position:absolute;left:3px;top:319.35px;height:11.35px;line-height:11.35px;font-family:'Liberation Mono', monospace;font-size:8.77px;white-space:pre"><span style="color:#adadad;font-style:italic;">#nsıwoüuñ 2</span></div>
<div style="position:absolute;left:3px;top:330.70px;height:11.35px;line-height:11.35px;font-family:'Liberation Mono', monospace;font-size:8.77px;white-space:pre"><span style="color:#262626;">plt.figure(</span><span style="color:#00aa00;">'cube exp linear'</span><span style="color:#262626;">)</span></div>
<div style="position:absolute;left:3px;top:342.05px;height:11.35px;line-height:11.35px;font-family:'Liberation Mono', monospace;font-size:8.77px;white-space:pre"><span style="color:#262626;">plt.clf()</span></div>
<div style="position:absolute;left:3px;top:353.40px;height:11.35px;line-height:11.35px;font-family:'Liberation Mono', monospace;font-size:8.77px;white-space:pre"><span style="color:#262626;">plt.plot(mySamples, myCubic, </span><span style="color:#00aa00;">'g--'</span><span style="color:#262626;">, label = </span><span style="color:#00aa00;">'cubic'</span><span style="color:#262626;">, linewidth = </span><span style="color:#800000;">2.0</span><span style="color:#262626;">)</span></div>
<div style="position:absolute;left:3px;top:364.75px;height:11.35px;line-height:11.35px;font-family:'Liberation Mono', monospace;font-size:8.77px;white-space:pre"><span style="color:#262626;">plt.plot(mySamples, myExponential, </span><span style="color:#00aa00;">'r'</span><span style="color:#262626;">,label = </span><span style="color:#00aa00;">'exponential'</span><span style="color:#262626;">, linewidth = </span><span style="color:#800000;">4.0</span><span style="color:#262626;">)</span></div>
<div style="position:absolute;left:3px;top:376.10px;height:11.35px;line-height:11.35px;font-family:'Liberation Mono', monospace;font-size:8.77px;white-space:pre"><span style="color:#adadad;font-style:italic;">#nãoouonoı nsıwlãulnu uunoeıls</span></div>
<div style="position:absolute;left:3px;top:387.45px;height:11.35px;line-height:11.35px;font-family:'Liberation Mono', monospace;font-size:8.77px;white-space:pre"><span style="color:#262626;">plt.legend()</span></div>
<div style="position:absolute;left:3px;top:398.80px;height:11.35px;line-height:11.35px;font-family:'Liberation Mono', monospace;font-size:8.77px;white-space:pre"><span style="color:#262626;">plt.title(</span><span style="color:#00aa00;">'Cubic vs. Exponential'</span><span style="color:#262626;">)</span></div>
<div style="position:absolute;left:3px;top:410.15px;height:11.35px;line-height:11.35px;font-family:'Liberation Mono', monospace;font-size:8.77px;white-space:pre"></div>
</div>
<div style="position:absolute;left:0px;top:95.55px;width:24.3px;text-align:right;height:11.35px;line-height:11.35px;font-family:'Liberation Mono', monospace;font-size:8.77px;white-space:pre;color:#8a8a8a;font-weight:400">18</div>
<div style="position:absolute;left:0px;top:106.90px;width:24.3px;text-align:right;height:11.35px;line-height:11.35px;font-family:'Liberation Mono', monospace;font-size:8.77px;white-space:pre;color:#8a8a8a;font-weight:400">19</div>
<div style="position:absolute;left:0px;top:118.25px;width:24.3px;text-align:right;height:11.35px;line-height:11.35px;font-family:'Liberation Mono', monospace;font-size:8.77px;white-space:pre;color:#8a8a8a;font-weight:400">20</div>
<div style="position:absolute;left:0px;top:129.60px;width:24.3px;text-align:right;height:11.35px;line-height:11.35px;font-family:'Liberation Mono', monospace;font-size:8.77px;white-space:pre;color:#8a8a8a;font-weight:400">21</div>
<div style="position:absolute;left:0px;top:140.95px;width:24.3px;text-align:right;height:11.35px;line-height:11.35px;font-family:'Liberation Mono', monospace;font-size:8.77px;white-space:pre;color:#8a8a8a;font-weight:400">22</div>
<div style="position:absolute;left:0px;top:152.30px;width:24.3px;text-align:right;height:11.35px;line-height:11.35px;font-family:'Liberation Mono', monospace;font-size:8.77px;white-space:pre;color:#8a8a8a;font-weight:400">23</div>
<div style="position:absolute;left:0px;top:163.65px;width:24.3px;text-align:right;height:11.35px;line-height:11.35px;font-family:'Liberation Mono', monospace;font-size:8.77px;white-space:pre;color:#8a8a8a;font-weight:400">24</div>
<div style="position:absolute;left:0px;top:175.00px;width:24.3px;text-align:right;height:11.35px;line-height:11.35px;font-family:'Liberation Mono', monospace;font-size:8.77px;white-space:pre;color:#8a8a8a;font-weight:400">25</div>
<div style="position:absolute;left:0px;top:186.35px;width:24.3px;text-align:right;height:11.35px;line-height:11.35px;font-family:'Liberation Mono', monospace;font-size:8.77px;white-space:pre;color:#8a8a8a;font-weight:400">26</div>
<div style="position:absolute;left:0px;top:197.70px;width:24.3px;text-align:right;height:11.35px;line-height:11.35px;font-family:'Liberation Mono', monospace;font-size:8.77px;white-space:pre;color:#8a8a8a;font-weight:400">27</div>
<div style="position:absolute;left:0px;top:209.05px;width:24.3px;text-align:right;height:11.35px;line-height:11.35px;font-family:'Liberation Mono', monospace;font-size:8.77px;white-space:pre;color:#8a8a8a;font-weight:400">28</div>
<div style="position:absolute;left:0px;top:220.40px;width:24.3px;text-align:right;height:11.35px;line-height:11.35px;font-family:'Liberation Mono', monospace;font-size:8.77px;white-space:pre;color:#8a8a8a;font-weight:400">29</div>
<div style="position:absolute;left:0px;top:231.75px;width:24.3px;text-align:right;height:11.35px;line-height:11.35px;font-family:'Liberation Mono', monospace;font-size:8.77px;white-space:pre;color:#8a8a8a;font-weight:400">30</div>
<div style="position:absolute;left:0px;top:243.10px;width:24.3px;text-align:right;height:11.35px;line-height:11.35px;font-family:'Liberation Mono', monospace;font-size:8.77px;white-space:pre;color:#8a8a8a;font-weight:400">31</div>
<div style="position:absolute;left:0px;top:254.45px;width:24.3px;text-align:right;height:11.35px;line-height:11.35px;font-family:'Liberation Mono', monospace;font-size:8.77px;white-space:pre;color:#8a8a8a;font-weight:400">32</div>
<div style="position:absolute;left:0px;top:265.80px;width:24.3px;text-align:right;height:11.35px;line-height:11.35px;font-family:'Liberation Mono', monospace;font-size:8.77px;white-space:pre;color:#8a8a8a;font-weight:400">33</div>
<div style="position:absolute;left:0px;top:277.15px;width:24.3px;text-align:right;height:11.35px;line-height:11.35px;font-family:'Liberation Mono', monospace;font-size:8.77px;white-space:pre;color:#8a8a8a;font-weight:400">34</div>
<div style="position:absolute;left:0px;top:288.50px;width:24.3px;text-align:right;height:11.35px;line-height:11.35px;font-family:'Liberation Mono', monospace;font-size:8.77px;white-space:pre;color:#8a8a8a;font-weight:400">35</div>
<div style="position:absolute;left:0px;top:299.85px;width:24.3px;text-align:right;height:11.35px;line-height:11.35px;font-family:'Liberation Mono', monospace;font-size:8.77px;white-space:pre;color:#8a8a8a;font-weight:400">36</div>
<div style="position:absolute;left:0px;top:311.20px;width:24.3px;text-align:right;height:11.35px;line-height:11.35px;font-family:'Liberation Mono', monospace;font-size:8.77px;white-space:pre;color:#8a8a8a;font-weight:400">37</div>
<div style="position:absolute;left:0px;top:322.55px;width:24.3px;text-align:right;height:11.35px;line-height:11.35px;font-family:'Liberation Mono', monospace;font-size:8.77px;white-space:pre;color:#8a8a8a;font-weight:400">38</div>
<div style="position:absolute;left:0px;top:333.90px;width:24.3px;text-align:right;height:11.35px;line-height:11.35px;font-family:'Liberation Mono', monospace;font-size:8.77px;white-space:pre;color:#8a8a8a;font-weight:400">39</div>
<div style="position:absolute;left:0px;top:345.25px;width:24.3px;text-align:right;height:11.35px;line-height:11.35px;font-family:'Liberation Mono', monospace;font-size:8.77px;white-space:pre;color:#8a8a8a;font-weight:400">40</div>
<div style="position:absolute;left:0px;top:356.60px;width:24.3px;text-align:right;height:11.35px;line-height:11.35px;font-family:'Liberation Mono', monospace;font-size:8.77px;white-space:pre;color:#8a8a8a;font-weight:400">41</div>
<div style="position:absolute;left:0px;top:367.95px;width:24.3px;text-align:right;height:11.35px;line-height:11.35px;font-family:'Liberation Mono', monospace;font-size:8.77px;white-space:pre;color:#8a8a8a;font-weight:400">42</div>
<div style="position:absolute;left:0px;top:379.30px;width:24.3px;text-align:right;height:11.35px;line-height:11.35px;font-family:'Liberation Mono', monospace;font-size:8.77px;white-space:pre;color:#8a8a8a;font-weight:400">43</div>
<div style="position:absolute;left:0px;top:390.65px;width:24.3px;text-align:right;height:11.35px;line-height:11.35px;font-family:'Liberation Mono', monospace;font-size:8.77px;white-space:pre;color:#8a8a8a;font-weight:400">44</div>
<div style="position:absolute;left:0px;top:402.00px;width:24.3px;text-align:right;height:11.35px;line-height:11.35px;font-family:'Liberation Mono', monospace;font-size:8.77px;white-space:pre;color:#8a8a8a;font-weight:400">45</div>
<div style="position:absolute;left:0px;top:413.35px;width:24.3px;text-align:right;height:11.35px;line-height:11.35px;font-family:'Liberation Mono', monospace;font-size:8.77px;white-space:pre;color:#8a8a8a;font-weight:400">46</div>
<div style="position:absolute;left:0px;top:424.70px;width:24.3px;text-align:right;height:11.35px;line-height:11.35px;font-family:'Liberation Mono', monospace;font-size:8.77px;white-space:pre;color:#8a8a8a;font-weight:400">47</div>
<div style="position:absolute;left:0px;top:436.05px;width:24.3px;text-align:right;height:11.35px;line-height:11.35px;font-family:'Liberation Mono', monospace;font-size:8.77px;white-space:pre;color:#8a8a8a;font-weight:400">48</div>
<div style="position:absolute;left:0px;top:447.40px;width:24.3px;text-align:right;height:11.35px;line-height:11.35px;font-family:'Liberation Mono', monospace;font-size:8.77px;white-space:pre;color:#8a8a8a;font-weight:400">49</div>
<div style="position:absolute;left:0px;top:458.75px;width:24.3px;text-align:right;height:11.35px;line-height:11.35px;font-family:'Liberation Mono', monospace;font-size:8.77px;white-space:pre;color:#8a8a8a;font-weight:400">50</div>
<div style="position:absolute;left:0px;top:470.10px;width:24.3px;text-align:right;height:11.35px;line-height:11.35px;font-family:'Liberation Mono', monospace;font-size:8.77px;white-space:pre;color:#000;font-weight:700">51</div>
<div style="position:absolute;left:0px;top:481.45px;width:24.3px;text-align:right;height:11.35px;line-height:11.35px;font-family:'Liberation Mono', monospace;font-size:8.77px;white-space:pre;color:#8a8a8a;font-weight:400">52</div>
<div style="position:absolute;left:0px;top:492.80px;width:24.3px;text-align:right;height:11.35px;line-height:11.35px;font-family:'Liberation Mono', monospace;font-size:8.77px;white-space:pre;color:#8a8a8a;font-weight:400">53</div>
<div style="position:absolute;left:0px;top:504.15px;width:24.3px;text-align:right;height:11.35px;line-height:11.35px;font-family:'Liberation Mono', monospace;font-size:8.77px;white-space:pre;color:#8a8a8a;font-weight:400">54</div>
<div style="position:absolute;left:464.20px;top:92.66px;line-height:20px;font-family:'Liberation Mono', monospace;font-size:8.77px;white-space:pre"><span style="color:#000080"> n [</span><span style="color:#000080;font-weight:700">4</span><span style="color:#000080">]: </span><span style="color:#000">runfile(</span><span style="color:#ba2121">'C:/Users/adminping/.spyder-py3/temp.py'</span><span style="color:#000">, wdir=</span><span style="color:#ba2121">'C:/Users/adminping/.spyder-py3'</span><span style="color:#000">)</span></div>
<svg style="position:absolute;left:0;top:0" width="1024" height="552" viewBox="0 0 1024 552"><clipPath id="cons"><rect x="461" y="94" width="550" height="420.7"/></clipPath><g clip-path="url(#cons)"><rect x="489.5" y="135.5" width="250.89999999999998" height="163.0" fill="#f8f8f8" stroke="#444" stroke-width="0.9"/><text x="614.95" y="131.20" font-family="Liberation Sans" font-size="10.2" fill="#262626" text-anchor="middle">Cubic vs. Exponential</text><path d="M486.5 291.60 H489.5" stroke="#333" stroke-width="0.9"/><text x="479.30" y="295.30" font-family="Liberation Sans" font-size="8.4" fill="#262626" text-anchor="end">10</text><text x="479.3" y="292.20" font-family="Liberation Sans" font-size="5.4" fill="#262626">0</text><path d="M487.9 282.80 H489.5" stroke="#444" stroke-width="0.6"/><path d="M487.9 277.66 H489.5" stroke="#444" stroke-width="0.6"/><path d="M487.9 274.01 H489.5" stroke="#444" stroke-width="0.6"/><path d="M487.9 271.18 H489.5" stroke="#444" stroke-width="0.6"/><path d="M487.9 268.86 H489.5" stroke="#444" stroke-width="0.6"/><path d="M487.9 266.91 H489.5" stroke="#444" stroke-width="0.6"/><path d="M487.9 265.21 H489.5" stroke="#444" stroke-width="0.6"/><path d="M487.9 263.72 H489.5" stroke="#444" stroke-width="0.6"/><path d="M486.5 262.38 H489.5" stroke="#333" stroke-width="0.9"/><text x="479.30" y="266.08" font-family="Liberation Sans" font-size="8.4" fill="#262626" text-anchor="end">10</text><text x="479.3" y="262.98" font-family="Liberation Sans" font-size="5.4" fill="#262626">1</text><path d="M487.9 253.58 H489.5" stroke="#444" stroke-width="0.6"/><path d="M487.9 248.44 H489.5" stroke="#444" stroke-width="0.6"/><path d="M487.9 244.79 H489.5" stroke="#444" stroke-width="0.6"/><path d="M487.9 241.96 H489.5" stroke="#444" stroke-width="0.6"/><path d="M487.9 239.64 H489.5" stroke="#444" stroke-width="0.6"/><path d="M487.9 237.69 H489.5" stroke="#444" stroke-width="0.6"/><path d="M487.9 235.99 H489.5" stroke="#444" stroke-width="0.6"/><path d="M487.9 234.50 H489.5" stroke="#444" stroke-width="0.6"/><path d="M486.5 233.16 H489.5" stroke="#333" stroke-width="0.9"/><text x="479.30" y="236.86" font-family="Liberation Sans" font-size="8.4" fill="#262626" text-anchor="end">10</text><text x="479.3" y="233.76" font-family="Liberation Sans" font-size="5.4" fill="#262626">2</text><path d="M487.9 224.36 H489.5" stroke="#444" stroke-width="0.6"/><path d="M487.9 219.22 H489.5" stroke="#444" stroke-width="0.6"/><path d="M487.9 215.57 H489.5" stroke="#444" stroke-width="0.6"/><path d="M487.9 212.74 H489.5" stroke="#444" stroke-width="0.6"/><path d="M487.9 210.42 H489.5" stroke="#444" stroke-width="0.6"/><path d="M487.9 208.47 H489.5" stroke="#444" stroke-width="0.6"/><path d="M487.9 206.77 H489.5" stroke="#444" stroke-width="0.6"/><path d="M487.9 205.28 H489.5" stroke="#444" stroke-width="0.6"/><path d="M486.5 203.94 H489.5" stroke="#333" stroke-width="0.9"/><text x="479.30" y="207.64" font-family="Liberation Sans" font-size="8.4" fill="#262626" text-anchor="end">10</text><text x="479.3" y="204.54" font-family="Liberation Sans" font-size="5.4" fill="#262626">3</text><path d="M487.9 195.14 H489.5" stroke="#444" stroke-width="0.6"/><path d="M487.9 190.00 H489.5" stroke="#444" stroke-width="0.6"/><path d="M487.9 186.35 H489.5" stroke="#444" stroke-width="0.6"/><path d="M487.9 183.52 H489.5" stroke="#444" stroke-width="0.6"/><path d="M487.9 181.20 H489.5" stroke="#444" stroke-width="0.6"/><path d="M487.9 179.25 H489.5" stroke="#444" stroke-width="0.6"/><path d="M487.9 177.55 H489.5" stroke="#444" stroke-width="0.6"/><path d="M487.9 176.06 H489.5" stroke="#444" stroke-width="0.6"/><path d="M486.5 174.72 H489.5" stroke="#333" stroke-width="0.9"/><text x="479.30" y="178.42" font-family="Liberation Sans" font-size="8.4" fill="#262626" text-anchor="end">10</text><text x="479.3" y="175.32" font-family="Liberation Sans" font-size="5.4" fill="#262626">4</text><path d="M487.9 165.92 H489.5" stroke="#444" stroke-width="0.6"/><path d="M487.9 160.78 H489.5" stroke="#444" stroke-width="0.6"/><path d="M487.9 157.13 H489.5" stroke="#444" stroke-width="0.6"/><path d="M487.9 154.30 H489.5" stroke="#444" stroke-width="0.6"/><path d="M487.9 151.98 H489.5" stroke="#444" stroke-width="0.6"/><path d="M487.9 150.03 H489.5" stroke="#444" stroke-width="0.6"/><path d="M487.9 148.33 H489.5" stroke="#444" stroke-width="0.6"/><path d="M487.9 146.84 H489.5" stroke="#444" stroke-width="0.6"/><path d="M486.5 145.50 H489.5" stroke="#333" stroke-width="0.9"/><text x="479.30" y="149.20" font-family="Liberation Sans" font-size="8.4" fill="#262626" text-anchor="end">10</text><text x="479.3" y="146.10" font-family="Liberation Sans" font-size="5.4" fill="#262626">5</text><path d="M487.9 136.70 H489.5" stroke="#444" stroke-width="0.6"/><path d="M487.9 298.08 H489.5" stroke="#444" stroke-width="0.6"/><path d="M487.9 296.13 H489.5" stroke="#444" stroke-width="0.6"/><path d="M487.9 294.43 H489.5" stroke="#444" stroke-width="0.6"/><path d="M487.9 292.94 H489.5" stroke="#444" stroke-width="0.6"/><path d="M500.30 298.5 V301.5" stroke="#333" stroke-width="0.9"/><text x="500.30" y="310.80" font-family="Liberation Sans" font-size="8.4" fill="#262626" text-anchor="middle">0</text><path d="M539.65 298.5 V301.5" stroke="#333" stroke-width="0.9"/><text x="539.65" y="310.80" font-family="Liberation Sans" font-size="8.4" fill="#262626" text-anchor="middle">5</text><path d="M579.00 298.5 V301.5" stroke="#333" stroke-width="0.9"/><text x="579.00" y="310.80" font-family="Liberation Sans" font-size="8.4" fill="#262626" text-anchor="middle">10</text><path d="M618.35 298.5 V301.5" stroke="#333" stroke-width="0.9"/><text x="618.35" y="310.80" font-family="Liberation Sans" font-size="8.4" fill="#262626" text-anchor="middle">15</text><path d="M657.70 298.5 V301.5" stroke="#333" stroke-width="0.9"/><text x="657.70" y="310.80" font-family="Liberation Sans" font-size="8.4" fill="#262626" text-anchor="middle">20</text><path d="M697.05 298.5 V301.5" stroke="#333" stroke-width="0.9"/><text x="697.05" y="310.80" font-family="Liberation Sans" font-size="8.4" fill="#262626" text-anchor="middle">25</text><path d="M736.40 298.5 V301.5" stroke="#333" stroke-width="0.9"/><text x="736.40" y="310.80" font-family="Liberation Sans" font-size="8.4" fill="#262626" text-anchor="middle">30</text><clipPath id="c1"><rect x="489.5" y="135.5" width="250.89999999999998" height="163.0"/></clipPath><g clip-path="url(#c1)"><path d="M508.02 303.50 L508.17 291.60 L516.04 265.21 L523.91 249.78 L531.78 238.82 L539.65 230.33 L547.52 223.39 L555.39 217.52 L563.26 212.44 L571.13 207.95 L579.00 203.94 L586.87 200.31 L594.74 197.00 L602.61 193.95 L610.48 191.13 L618.35 188.50 L626.22 186.05 L634.09 183.74 L641.96 181.56 L649.83 179.50 L657.70 177.55 L665.57 175.69 L673.44 173.92 L681.31 172.23 L689.18 170.61 L697.05 169.06 L704.92 167.56 L712.79 166.13 L720.66 164.74 L728.53 163.41" fill="none" stroke="#008000" stroke-width="1.5" stroke-dasharray="4.2 2.4"/><path d="M500.30 291.60 L728.53 142.38" stroke="#ff0000" stroke-width="3" stroke-linecap="square"/></g><rect x="492.6" y="139.5" width="71.6" height="24" rx="2" fill="#f8f8f8" stroke="#cfcfcf" stroke-width="0.8"/><path d="M494.6 145.7 H511.6" stroke="#008000" stroke-width="1.5" stroke-dasharray="4.2 2.4"/><path d="M494.6 157 H511.6" stroke="#ff0000" stroke-width="3"/><text x="517.60" y="148.80" font-family="Liberation Sans" font-size="8.4" fill="#262626" text-anchor="start">cubic</text><text x="517.60" y="160.10" font-family="Liberation Sans" font-size="8.4" fill="#262626" text-anchor="start">exponential</text><rect x="503.5" y="344" width="251.39999999999998" height="164.2" fill="#f8f8f8" stroke="#444" stroke-width="0.9"/><text x="629.20" y="340.60" font-family="Liberation Sans" font-size="10.2" fill="#262626" text-anchor="middle">Cubic vs. Exponential</text><path d="M500.5 500.60 H503.5" stroke="#333" stroke-width="0.9"/><text x="497.30" y="503.70" font-family="Liberation Sans" font-size="8.4" fill="#262626" text-anchor="end">0</text><path d="M500.5 477.36 H503.5" stroke="#333" stroke-width="0.9"/><text x="497.30" y="480.46" font-family="Liberation Sans" font-size="8.4" fill="#262626" text-anchor="end">20000</text><path d="M500.5 454.12 H503.5" stroke="#333" stroke-width="0.9"/><text x="497.30" y="457.22" font-family="Liberation Sans" font-size="8.4" fill="#262626" text-anchor="end">40000</text><path d="M500.5 430.88 H503.5" stroke="#333" stroke-width="0.9"/><text x="497.30" y="433.98" font-family="Liberation Sans" font-size="8.4" fill="#262626" text-anchor="end">60000</text><path d="M500.5 407.64 H503.5" stroke="#333" stroke-width="0.9"/><text x="497.30" y="410.74" font-family="Liberation Sans" font-size="8.4" fill="#262626" text-anchor="end">80000</text><path d="M500.5 384.40 H503.5" stroke="#333" stroke-width="0.9"/><text x="497.30" y="387.50" font-family="Liberation Sans" font-size="8.4" fill="#262626" text-anchor="end">100000</text><path d="M500.5 361.16 H503.5" stroke="#333" stroke-width="0.9"/><text x="497.30" y="364.26" font-family="Liberation Sans" font-size="8.4" fill="#262626" text-anchor="end">120000</text><path d="M515.30 508.2 V511.2" stroke="#333" stroke-width="0.9"/><text x="515.30" y="519.50" font-family="Liberation Sans" font-size="8.4" fill="#262626" text-anchor="middle">0</text><path d="M554.65 508.2 V511.2" stroke="#333" stroke-width="0.9"/><text x="554.65" y="519.50" font-family="Liberation Sans" font-size="8.4" fill="#262626" text-anchor="middle">5</text><path d="M594.00 508.2 V511.2" stroke="#333" stroke-width="0.9"/><text x="594.00" y="519.50" font-family="Liberation Sans" font-size="8.4" fill="#262626" text-anchor="middle">10</text><path d="M633.35 508.2 V511.2" stroke="#333" stroke-width="0.9"/><text x="633.35" y="519.50" font-family="Liberation Sans" font-size="8.4" fill="#262626" text-anchor="middle">15</text><path d="M672.70 508.2 V511.2" stroke="#333" stroke-width="0.9"/><text x="672.70" y="519.50" font-family="Liberation Sans" font-size="8.4" fill="#262626" text-anchor="middle">20</text><path d="M712.05 508.2 V511.2" stroke="#333" stroke-width="0.9"/><text x="712.05" y="519.50" font-family="Liberation Sans" font-size="8.4" fill="#262626" text-anchor="middle">25</text><path d="M751.40 508.2 V511.2" stroke="#333" stroke-width="0.9"/><text x="751.40" y="519.50" font-family="Liberation Sans" font-size="8.4" fill="#262626" text-anchor="middle">30</text><clipPath id="c2"><rect x="503.5" y="344" width="251.39999999999998" height="164.2"/></clipPath><g clip-path="url(#c2)"><path d="M515.30 500.60 L523.17 500.60 L531.04 500.59 L538.91 500.57 L546.78 500.53 L554.65 500.45 L562.52 500.35 L570.39 500.20 L578.26 500.01 L586.13 499.75 L594.00 499.44 L601.87 499.05 L609.74 498.59 L617.61 498.05 L625.48 497.41 L633.35 496.68 L641.22 495.84 L649.09 494.89 L656.96 493.82 L664.83 492.63 L672.70 491.30 L680.57 489.84 L688.44 488.23 L696.31 486.46 L704.18 484.54 L712.05 482.44 L719.92 480.18 L727.79 477.73 L735.66 475.09 L743.53 472.26" fill="none" stroke="#008000" stroke-width="1.5" stroke-dasharray="4.2 2.4"/><path d="M515.30 500.60 L523.17 500.60 L531.04 500.60 L538.91 500.60 L546.78 500.59 L554.65 500.59 L562.52 500.59 L570.39 500.58 L578.26 500.57 L586.13 500.56 L594.00 500.53 L601.87 500.50 L609.74 500.45 L617.61 500.37 L625.48 500.26 L633.35 500.09 L641.22 499.84 L649.09 499.46 L656.96 498.88 L664.83 498.02 L672.70 496.74 L680.57 494.80 L688.44 491.91 L696.31 487.56 L704.18 481.04 L712.05 471.26 L719.92 456.59 L727.79 434.58 L735.66 401.57 L743.53 352.06" fill="none" stroke="#ff0000" stroke-width="3" stroke-linejoin="round" stroke-linecap="square"/></g><rect x="507.5" y="348.5" width="71.2" height="24.5" rx="2" fill="#f8f8f8" stroke="#cfcfcf" stroke-width="0.8"/><path d="M509.5 354.9 H526.5" stroke="#008000" stroke-width="1.5" stroke-dasharray="4.2 2.4"/><path d="M509.5 366.3 H526.5" stroke="#ff0000" stroke-width="3"/><text x="531.60" y="357.90" font-family="Liberation Sans" font-size="8.4" fill="#262626" text-anchor="start">cubic</text><text x="531.60" y="369.30" font-family="Liberation Sans" font-size="8.4" fill="#262626" text-anchor="start">exponential</text></g></svg>
<svg style="position:absolute;left:0;top:0" width="1024" height="552" viewBox="0 0 1024 552"><rect x="385.8" y="89.1" width="81.6" height="25.5" fill="#f8f8f8" stroke="#7b3434" stroke-width="2"/><text x="425.4" y="106.6" font-family="Liberation Sans" font-weight="700" font-size="15" fill="#000" text-anchor="middle">Legend</text><path d="M438.8 115.8 L497 135.2" stroke="#7a0c0c" stroke-width="2.2"/><path d="M507.8 140.6 L488.6 138.2 L491.5 130.8 Z" fill="#7a0c0c"/></svg>
<!--REST-->
</body></html>
